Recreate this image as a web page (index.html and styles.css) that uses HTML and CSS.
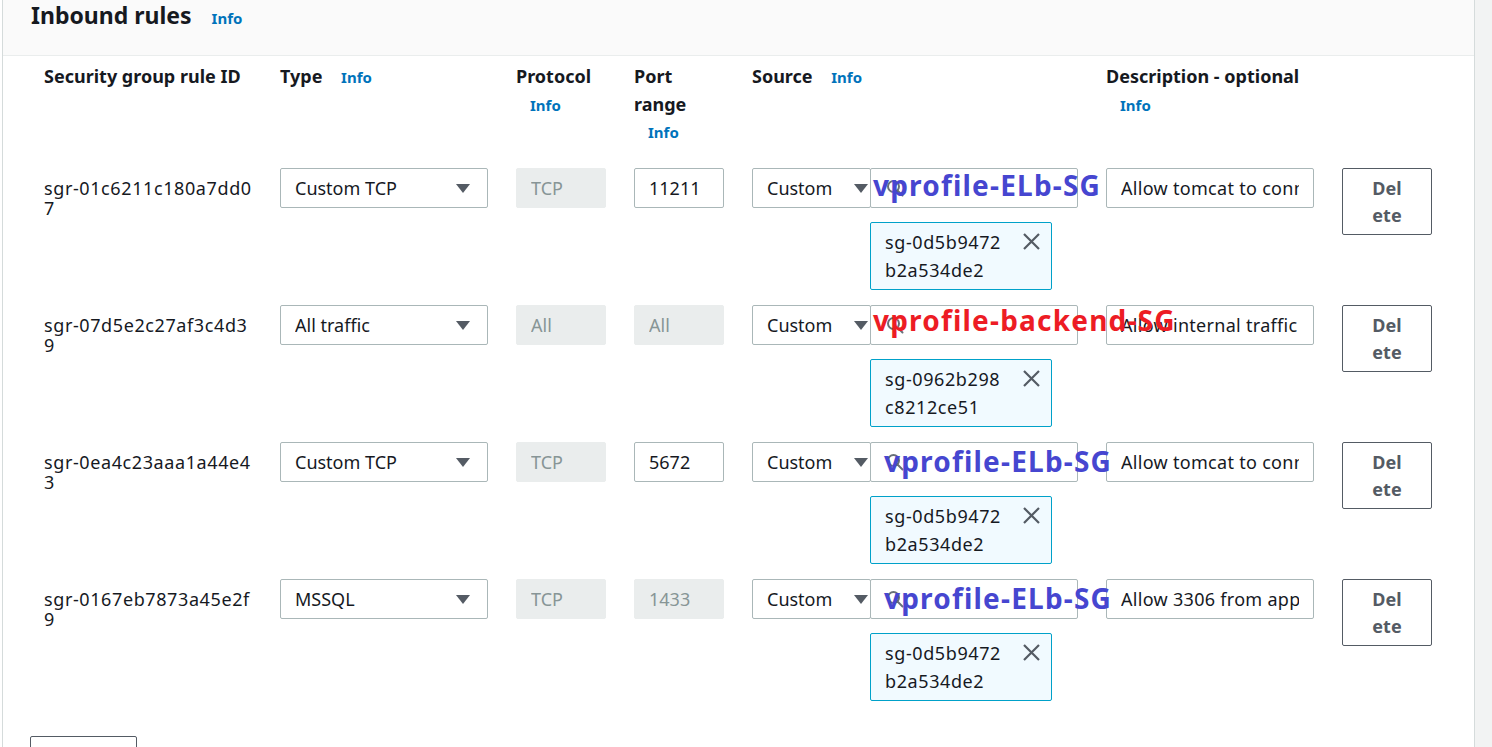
FILE: index.html
```html
<!DOCTYPE html>
<html lang="en">
<head>
<meta charset="utf-8">
<title>Inbound rules</title>
<link rel="stylesheet" href="styles.css">
</head>
<body>
<div class="page">
  <section class="panel">
    <header class="panel-header">
      <h2 class="panel-title">Inbound rules</h2>
      <a class="info info--title" href="#">Info</a>
    </header>

    <div class="rules">
      <div class="rule-grid rule-head">
        <div>Security group rule ID</div>
        <div>Type <a class="info" href="#">Info</a></div>
        <div>Protocol <a class="info" href="#">Info</a></div>
        <div>Port range <a class="info" href="#">Info</a></div>
        <div>Source <a class="info" href="#">Info</a></div>
        <div>Description - optional <a class="info" href="#">Info</a></div>
        <div></div>
      </div>

      <div class="rule-list">
        <!-- Rule 1 -->
        <div class="rule-grid rule-row">
          <div class="rule-id">sgr-01c6211c180a7dd07</div>
          <div class="field select select--type"><span class="field-text">Custom TCP</span><svg class="caret" width="14" height="9" viewBox="0 0 14 9"><path d="M0 0h14L7 9z"/></svg></div>
          <div class="field disabled"><span class="field-text">TCP</span></div>
          <div class="field"><span class="field-text">11211</span></div>
          <div class="source">
            <div class="source-inputs">
              <div class="field select select--source"><span class="field-text">Custom</span><svg class="caret" width="14" height="9" viewBox="0 0 14 9"><path d="M0 0h14L7 9z"/></svg></div>
              <div class="field search">
                <svg class="search-icon" width="18" height="18" viewBox="0 0 18 18"><circle cx="7.5" cy="7.5" r="5.5"/><path d="M11.5 11.5 16.5 16.5"/></svg>
                <span class="annotation annotation--blue annotation--r1">vprofile-ELb-SG</span>
              </div>
            </div>
            <div class="token">
              <span class="token-text">sg-0d5b9472b2a534de2</span>
              <svg class="token-close" width="19" height="19" viewBox="0 0 19 19"><path d="M2 2l15 15M17 2 2 17"/></svg>
            </div>
          </div>
          <div class="field field--desc"><span class="field-text">Allow tomcat to connect from ELB</span></div>
          <button class="btn-delete" type="button">Delete</button>
        </div>

        <!-- Rule 2 -->
        <div class="rule-grid rule-row">
          <div class="rule-id">sgr-07d5e2c27af3c4d39</div>
          <div class="field select select--type"><span class="field-text">All traffic</span><svg class="caret" width="14" height="9" viewBox="0 0 14 9"><path d="M0 0h14L7 9z"/></svg></div>
          <div class="field disabled"><span class="field-text">All</span></div>
          <div class="field disabled"><span class="field-text">All</span></div>
          <div class="source">
            <div class="source-inputs">
              <div class="field select select--source"><span class="field-text">Custom</span><svg class="caret" width="14" height="9" viewBox="0 0 14 9"><path d="M0 0h14L7 9z"/></svg></div>
              <div class="field search">
                <svg class="search-icon" width="18" height="18" viewBox="0 0 18 18"><circle cx="7.5" cy="7.5" r="5.5"/><path d="M11.5 11.5 16.5 16.5"/></svg>
                <span class="annotation annotation--red annotation--r2">vprofile-backend-SG</span>
              </div>
            </div>
            <div class="token">
              <span class="token-text">sg-0962b298c8212ce51</span>
              <svg class="token-close" width="19" height="19" viewBox="0 0 19 19"><path d="M2 2l15 15M17 2 2 17"/></svg>
            </div>
          </div>
          <div class="field field--desc"><span class="field-text">Allow internal traffic</span></div>
          <button class="btn-delete" type="button">Delete</button>
        </div>

        <!-- Rule 3 -->
        <div class="rule-grid rule-row">
          <div class="rule-id">sgr-0ea4c23aaa1a44e43</div>
          <div class="field select select--type"><span class="field-text">Custom TCP</span><svg class="caret" width="14" height="9" viewBox="0 0 14 9"><path d="M0 0h14L7 9z"/></svg></div>
          <div class="field disabled"><span class="field-text">TCP</span></div>
          <div class="field"><span class="field-text">5672</span></div>
          <div class="source">
            <div class="source-inputs">
              <div class="field select select--source"><span class="field-text">Custom</span><svg class="caret" width="14" height="9" viewBox="0 0 14 9"><path d="M0 0h14L7 9z"/></svg></div>
              <div class="field search">
                <svg class="search-icon" width="18" height="18" viewBox="0 0 18 18"><circle cx="7.5" cy="7.5" r="5.5"/><path d="M11.5 11.5 16.5 16.5"/></svg>
                <span class="annotation annotation--blue annotation--r3">vprofile-ELb-SG</span>
              </div>
            </div>
            <div class="token">
              <span class="token-text">sg-0d5b9472b2a534de2</span>
              <svg class="token-close" width="19" height="19" viewBox="0 0 19 19"><path d="M2 2l15 15M17 2 2 17"/></svg>
            </div>
          </div>
          <div class="field field--desc"><span class="field-text">Allow tomcat to connect from ELB</span></div>
          <button class="btn-delete" type="button">Delete</button>
        </div>

        <!-- Rule 4 -->
        <div class="rule-grid rule-row">
          <div class="rule-id">sgr-0167eb7873a45e2f9</div>
          <div class="field select select--type"><span class="field-text">MSSQL</span><svg class="caret" width="14" height="9" viewBox="0 0 14 9"><path d="M0 0h14L7 9z"/></svg></div>
          <div class="field disabled"><span class="field-text">TCP</span></div>
          <div class="field disabled"><span class="field-text">1433</span></div>
          <div class="source">
            <div class="source-inputs">
              <div class="field select select--source"><span class="field-text">Custom</span><svg class="caret" width="14" height="9" viewBox="0 0 14 9"><path d="M0 0h14L7 9z"/></svg></div>
              <div class="field search">
                <svg class="search-icon" width="18" height="18" viewBox="0 0 18 18"><circle cx="7.5" cy="7.5" r="5.5"/><path d="M11.5 11.5 16.5 16.5"/></svg>
                <span class="annotation annotation--blue annotation--r3">vprofile-ELb-SG</span>
              </div>
            </div>
            <div class="token">
              <span class="token-text">sg-0d5b9472b2a534de2</span>
              <svg class="token-close" width="19" height="19" viewBox="0 0 19 19"><path d="M2 2l15 15M17 2 2 17"/></svg>
            </div>
          </div>
          <div class="field field--desc"><span class="field-text">Allow 3306 from app server</span></div>
          <button class="btn-delete" type="button">Delete</button>
        </div>
      </div>
    </div>

    <div class="actions">
      <button class="btn" type="button">Add rule</button>
    </div>
  </section>
  <div class="gutter"></div>
</div>
</body>
</html>
```

FILE: styles.css
```css
html, body {
  margin: 0;
  height: 100%;
}

body {
  font-family: "Noto Sans", "Open Sans", sans-serif;
  color: #16191f;
  background: #ffffff;
  overflow: hidden;
}

.page {
  display: flex;
  min-height: 100vh;
  padding-left: 2px;
}

.panel {
  width: 1471px;
  flex: none;
  border-left: 1px solid #d5dbdb;
  border-right: 1px solid #d5dbdb;
  background: #ffffff;
}

.gutter {
  flex: 1;
  background: #f2f3f3;
}

/* header */
.panel-header {
  height: 55px;
  background: #fafafa;
  border-bottom: 1px solid #eaeded;
  display: flex;
  align-items: baseline;
  padding-left: 28px;
}

.panel-title {
  margin: 0;
  font-size: 23px;
  line-height: 30px;
  font-weight: 700;
}

.info {
  font-size: 15px;
  font-weight: 700;
  color: #0073bb;
  text-decoration: none;
}

.info--title {
  margin-left: 20px;
}

/* rules table */
.rules {
  padding: 7px 0 0 41px;
}

.rule-grid {
  display: grid;
  grid-template-columns: 208px 208px 90px 90px 326px 208px 90px;
  column-gap: 28px;
}

.rule-head {
  font-size: 18px;
  font-weight: 700;
  line-height: 27.5px;
  height: 105px;
}

.rule-head .info {
  display: inline-block;
  margin-left: 14px;
}

.rule-list {
  display: flex;
  flex-direction: column;
  gap: 15px;
}

.rule-row {
  align-items: start;
  font-size: 18px;
}

.rule-id {
  padding-top: 10px;
  line-height: 20px;
  word-break: break-all;
  letter-spacing: 0.6px;
}

/* inputs */
.field {
  height: 40px;
  box-sizing: border-box;
  border: 1px solid #aab7b8;
  border-radius: 2px;
  padding: 0 14px;
  display: flex;
  align-items: center;
  background: #ffffff;
  color: #16191f;
}

.field.disabled {
  background: #eaeded;
  border-color: #eaeded;
  color: #879596;
}

.field-text {
  flex: 1;
  min-width: 0;
  overflow: hidden;
  white-space: nowrap;
}

.field--desc .field-text {
  letter-spacing: 0.3px;
}

.caret {
  flex: none;
  margin-left: auto;
  fill: #545b64;
}

.select--type {
  padding-right: 17px;
}

/* source */
.source {
  display: flex;
  flex-direction: column;
}

.source-inputs {
  display: flex;
}

.select--source {
  width: 119px;
  flex: none;
  padding-right: 2px;
}

.select--source .field-text {
  flex: none;
}

.search {
  width: 208px;
  flex: none;
  margin-left: -1px;
  padding-left: 15px;
  position: relative;
}

.search-icon {
  fill: none;
  stroke: #687078;
  stroke-width: 2;
  stroke-linecap: round;
}

.annotation {
  position: absolute;
  font-size: 28px;
  font-weight: 700;
  line-height: 1;
  letter-spacing: 1.2px;
  white-space: nowrap;
}

.annotation--blue {
  color: #4646d0;
}

.annotation--red {
  color: #ed1c24;
}

.annotation--r1 {
  left: 2px;
  top: 2px;
}

.annotation--r2 {
  left: 2px;
  top: 0;
}

.annotation--r3 {
  left: 13px;
  top: 4px;
}

.token {
  margin: 14px 0 0 118px;
  width: 182px;
  height: 68px;
  box-sizing: border-box;
  border: 1px solid #00a1c9;
  border-radius: 2px;
  background: #f1faff;
  display: flex;
  align-items: flex-start;
  padding: 5px 10px 5px 14px;
  line-height: 28px;
}

.token-text {
  width: 120px;
  flex: none;
  word-break: break-all;
  letter-spacing: 0.6px;
}

.token-close {
  flex: none;
  margin: 4px 0 0 auto;
  fill: none;
  stroke: #545b64;
  stroke-width: 2.2;
}

/* buttons */
.btn-delete {
  width: 90px;
  height: 67px;
  box-sizing: border-box;
  border: 1px solid #545b64;
  border-radius: 2px;
  background: #ffffff;
  color: #545b64;
  font: 700 18px/27px "Noto Sans", "Open Sans", sans-serif;
  padding: 6px 27px 5px;
  word-break: break-all;
  text-align: center;
}

.actions {
  padding: 35px 0 0 27px;
}

.btn {
  width: 107px;
  height: 40px;
  box-sizing: border-box;
  border: 1px solid #545b64;
  border-radius: 2px;
  background: #ffffff;
  color: #545b64;
  font: 700 18px/24px "Noto Sans", "Open Sans", sans-serif;
  padding: 0;
}
```
